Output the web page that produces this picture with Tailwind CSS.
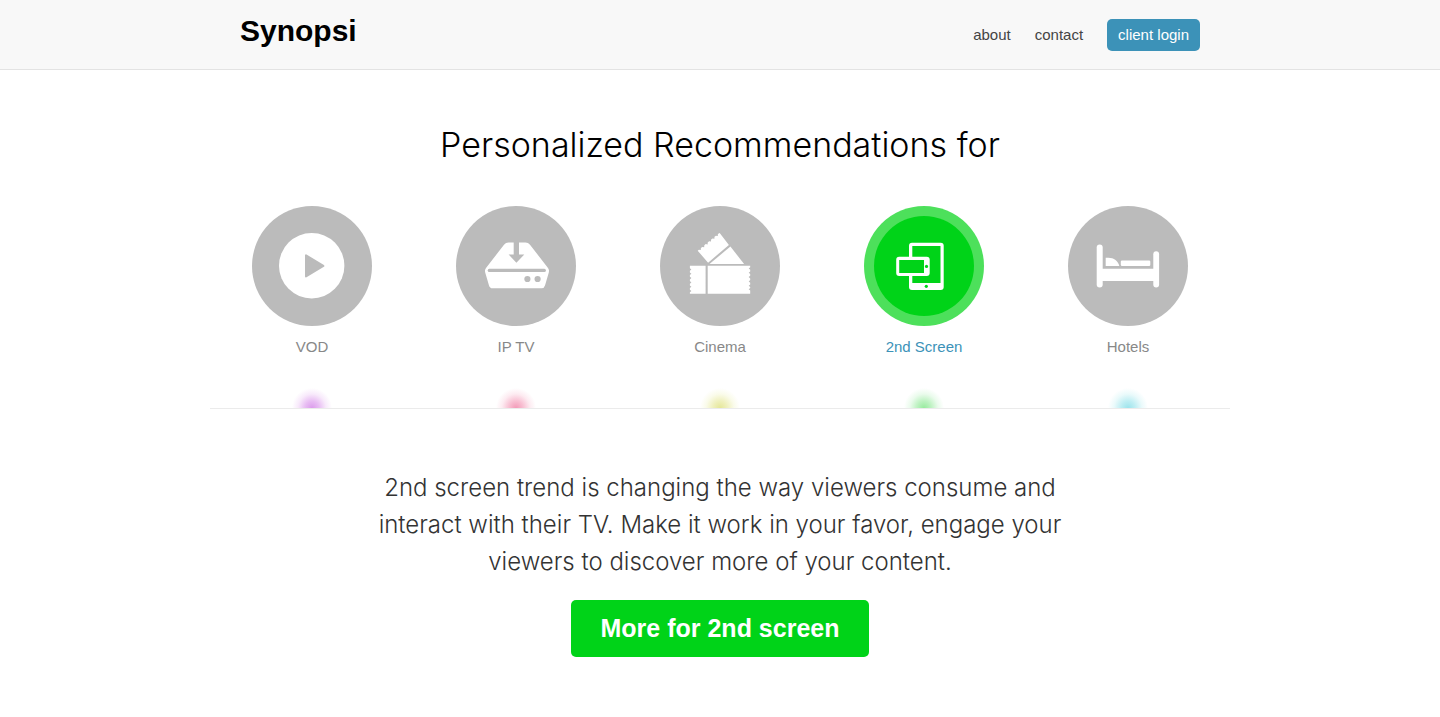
<!DOCTYPE html>
<html lang="en">
<head>
    <meta charset="UTF-8">
    <meta name="viewport" content="width=device-width, initial-scale=1.0">
    <title>Synopsi</title>
    <script src="https://cdn.jsdelivr.net/npm/@tailwindcss/browser@4"></script>
</head>
<body class="bg-white font-['Liberation_Sans',Arial,sans-serif] text-black">
    <!-- Header -->
    <header class="bg-[#f8f8f8] border-b border-[#e3e3e3]">
        <div class="max-w-[960px] mx-auto flex justify-between items-start pb-[18px]">
            <a href="#" class="mt-[13px] text-[30px] leading-9 font-bold">Synopsi</a>
            <nav class="mt-[19px] flex items-center gap-6 text-[15px] leading-8 text-[#444]">
                <a href="#about">about</a>
                <a href="#contact">contact</a>
                <a href="#login" class="bg-[#3c92b8] text-white rounded-[5px] px-[11px]">client login</a>
            </nav>
        </div>
    </header>

    <main class="max-w-[1020px] mx-auto text-center">
        <h1 class="pt-[50px] font-['Inter',sans-serif] font-light text-[34px] leading-[50px]">Personalized Recommendations for</h1>

        <!-- Products -->
        <nav class="mt-9 grid grid-cols-5 text-[15px] text-[#888] border-b border-[#ebebeb]">
            <a href="#vod" class="flex flex-col items-center">
                <svg class="size-[120px]" viewBox="0 0 120 120" aria-hidden="true">
                    <circle cx="60" cy="60" r="60" fill="#bbb"/>
                    <circle cx="59.7" cy="59.7" r="32.7" fill="#fff"/>
                    <path d="M54 49.3v21.2l17.4-10.6z" fill="#bbb" stroke="#bbb" stroke-width="2" stroke-linejoin="round"/>
                </svg>
                <span class="mt-3 leading-[18px]">VOD</span>
                <span class="mt-[30px] w-12 h-[22px] bg-[radial-gradient(circle_at_50%_100%,#dc9cec_0,#e8bdf3_7px,#f8eafb_14px,#fff_20px)]"></span>
            </a>
            <a href="#iptv" class="flex flex-col items-center">
                <svg class="size-[120px]" viewBox="0 0 120 120" aria-hidden="true">
                    <circle cx="60" cy="60" r="60" fill="#bbb"/>
                    <path d="M52.500 36.400h17q2.700 0 4.500 2.400L92 61.900q1.500 2 .8 4.500l-3.800 13q-.8 2.800-3.500 2.800H36.500q-2.700 0-3.500-2.800L29.200 66.400q-.7-2.500.8-4.500L48 38.800Q49.800 36.400 52.500 36.400z" fill="#fff"/>
                    <path d="M57.700 35.500H63V48.500h5.300L60.400 56.700 52.600 48.500h5.100z" fill="#bbb"/>
                    <path d="M33.300 64.400h55" stroke="#bbb" stroke-width="3.200" stroke-linecap="round"/>
                    <circle cx="71.400" cy="73" r="3.100" fill="#bbb"/>
                    <circle cx="81.600" cy="73" r="3.100" fill="#bbb"/>
                </svg>
                <span class="mt-3 leading-[18px]">IP TV</span>
                <span class="mt-[30px] w-12 h-[22px] bg-[radial-gradient(circle_at_50%_100%,#f39ab8_0,#f8bfd2_7px,#fdebf1_14px,#fff_20px)]"></span>
            </a>
            <a href="#cinema" class="flex flex-col items-center">
                <svg class="size-[120px]" viewBox="0 0 120 120" aria-hidden="true">
                    <circle cx="60" cy="60" r="60" fill="#bbb"/>
                    <path d="M29.900 59.700H45.600V87.800H29.900v-1.500l1.500-1.300-1.500-1.300V82l1.500-1.300-1.500-1.300v-1.700l1.500-1.300-1.500-1.300v-1.700l1.500-1.300-1.500-1.300v-1.700l1.500-1.300-1.500-1.300v-1.700l1.500-1.300-1.500-1.300z" fill="#fff"/>
                    <path d="M47.700 59.700H90.200v1.500l-1.500 1.300 1.500 1.300v1.700l-1.500 1.300 1.500 1.300v1.700l-1.500 1.300 1.500 1.300v1.700l-1.500 1.300 1.500 1.300v1.700l-1.500 1.300 1.500 1.300V82l-1.500 1.300 1.500 1.300v3.200H47.700z" fill="#fff"/>
                    <path d="M59.700 27l9.200 11.900L48.100 56.700 37.700 44.700l1.200-1 1.900.3.100-2 1.400-1.100 1.900.3.100-2 1.400-1.100 1.900.3.100-2 1.400-1.100 1.900.3.100-2 1.400-1.100 1.900.3.100-2 1.400-1.100 1.900.3.100-2z" fill="#fff"/>
                    <path d="M70.400 40.500L84.100 58H49.500z" fill="#fff"/>
                </svg>
                <span class="mt-3 leading-[18px]">Cinema</span>
                <span class="mt-[30px] w-12 h-[22px] bg-[radial-gradient(circle_at_50%_100%,#e5e798_0,#eff0bd_7px,#fafbea_14px,#fff_20px)]"></span>
            </a>
            <a href="#second-screen" class="flex flex-col items-center text-[#3c92b8]" aria-current="true">
                <svg class="size-[120px]" viewBox="0 0 120 120" aria-hidden="true">
                    <circle cx="60" cy="60" r="60" fill="#4de05b"/>
                    <circle cx="60" cy="60" r="50" fill="#00d318"/>
                    <rect x="45" y="36.700" width="34.700" height="47.300" rx="3" fill="#fff"/>
                    <rect x="48.300" y="40" width="28.200" height="37" fill="#00d318"/>
                    <circle cx="62.300" cy="80.300" r="1.600" fill="#00d318"/>
                    <rect x="32.200" y="50.800" width="33.500" height="19.200" rx="3" fill="#fff"/>
                    <rect x="35.200" y="54" width="24.800" height="13" fill="#00d318"/>
                    <circle cx="62.500" cy="60.400" r="1.600" fill="#00d318"/>
                </svg>
                <span class="mt-3 leading-[18px]">2nd Screen</span>
                <span class="mt-[30px] w-12 h-[22px] bg-[radial-gradient(circle_at_50%_100%,#97eb9e_0,#bdf2c1_7px,#eafbec_14px,#fff_20px)]"></span>
            </a>
            <a href="#hotels" class="flex flex-col items-center">
                <svg class="size-[120px]" viewBox="0 0 120 120" aria-hidden="true">
                    <circle cx="60" cy="60" r="60" fill="#bbb"/>
                    <rect x="28.700" y="38.500" width="6" height="43" rx="3" fill="#fff"/>
                    <rect x="85.300" y="45.300" width="5.800" height="36.200" rx="2.900" fill="#fff"/>
                    <path d="M32 62.700h56V75H32z" fill="#fff"/>
                    <path d="M37.700 60v-8.300h2.600c5.500 0 10 3.300 11 8.300z" fill="#fff"/>
                    <rect x="52.800" y="54.600" width="29.500" height="5.400" rx="1.200" fill="#fff"/>
                </svg>
                <span class="mt-3 leading-[18px]">Hotels</span>
                <span class="mt-[30px] w-12 h-[22px] bg-[radial-gradient(circle_at_50%_100%,#9ce4ec_0,#bfeef3_7px,#eafafb_14px,#fff_20px)]"></span>
            </a>
        </nav>

        <!-- Selected product -->
        <section class="pt-[60px] pb-[60px]">
            <p class="max-w-[700px] mx-auto font-['Inter',sans-serif] font-light text-[24px] leading-[37px] text-[#333]">2nd screen trend is changing the way viewers consume and interact with their TV. Make it work in your favor, engage your viewers to discover more of your content.</p>
            <a href="#more" class="mt-5 inline-block bg-[#00d318] text-white font-bold text-[25px] leading-[57px] rounded-[5px] px-[30px]">More for 2nd screen</a>
        </section>
    </main>
</body>
</html>
